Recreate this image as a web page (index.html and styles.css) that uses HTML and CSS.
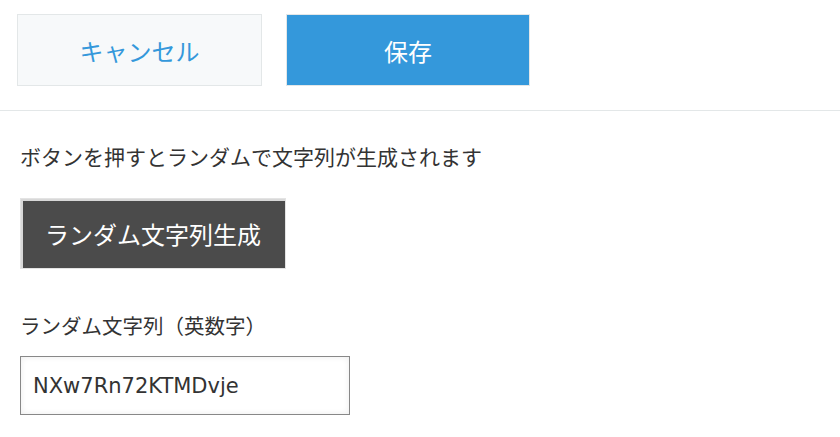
FILE: index.html
```html
<!DOCTYPE html>
<html lang="ja">
<head>
<meta charset="utf-8">
<link rel="stylesheet" href="styles.css">
</head>
<body>
<div class="actionbar">
  <button class="btn btn-cancel">キャンセル</button>
  <button class="btn btn-save">保存</button>
</div>
<div class="content">
  <p class="desc">ボタンを押すとランダムで文字列が生成されます</p>
  <button class="btn-gen">ランダム文字列生成</button>
  <div class="field">
    <div class="label">ランダム文字列（英数字）</div>
    <div class="input">NXw7Rn72KTMDvje</div>
  </div>
</div>
</body>
</html>
```
FILE: styles.css
```css
* { box-sizing: border-box; }
html, body { margin: 0; padding: 0; background: #fff; }
body {
  font-family: "Noto Sans CJK JP", "Noto Sans", sans-serif;
  color: #333;
}
.actionbar {
  display: flex;
  gap: 24px;
  padding: 14px 0 24px 17px;
  border-bottom: 1px solid #e3e7e8;
}
.btn {
  width: 245px;
  height: 72px;
  border: 1px solid #e3e7e8;
  font-family: inherit;
  font-size: 24px;
  padding: 0;
  margin: 0;
}
.btn-cancel { background: #f7f9fa; color: #3498db; }
.btn-save { background: #3498db; color: #fff; width: 244px; }
.content {
  padding: 0 0 0 20px;
  display: flex;
  flex-direction: column;
  align-items: flex-start;
}
.desc {
  margin: 33px 0 0 0;
  font-size: 21px;
  line-height: 24px;
}
.btn-gen {
  margin-top: 30px;
  width: 266px;
  height: 71px;
  background: #4b4b4b;
  color: #fff;
  border: 1px solid #e3e3e3;
  box-shadow: inset 2px 2px 0 #d8d8d8;
  font-family: inherit;
  font-size: 24px;
  padding: 0;
}
.field { margin-top: 44px; }
.label {
  font-size: 20.5px;
  line-height: 24px;
}
.input {
  margin-top: 19px;
  width: 330px;
  height: 59px;
  border: 1px solid #888;
  box-shadow: inset 0 0 6px rgba(0,0,0,0.08);
  padding: 0 12px;
  display: flex;
  align-items: center;
  font-family: "DejaVu Sans", sans-serif;
  font-size: 21px;
  color: #333;
}
```
